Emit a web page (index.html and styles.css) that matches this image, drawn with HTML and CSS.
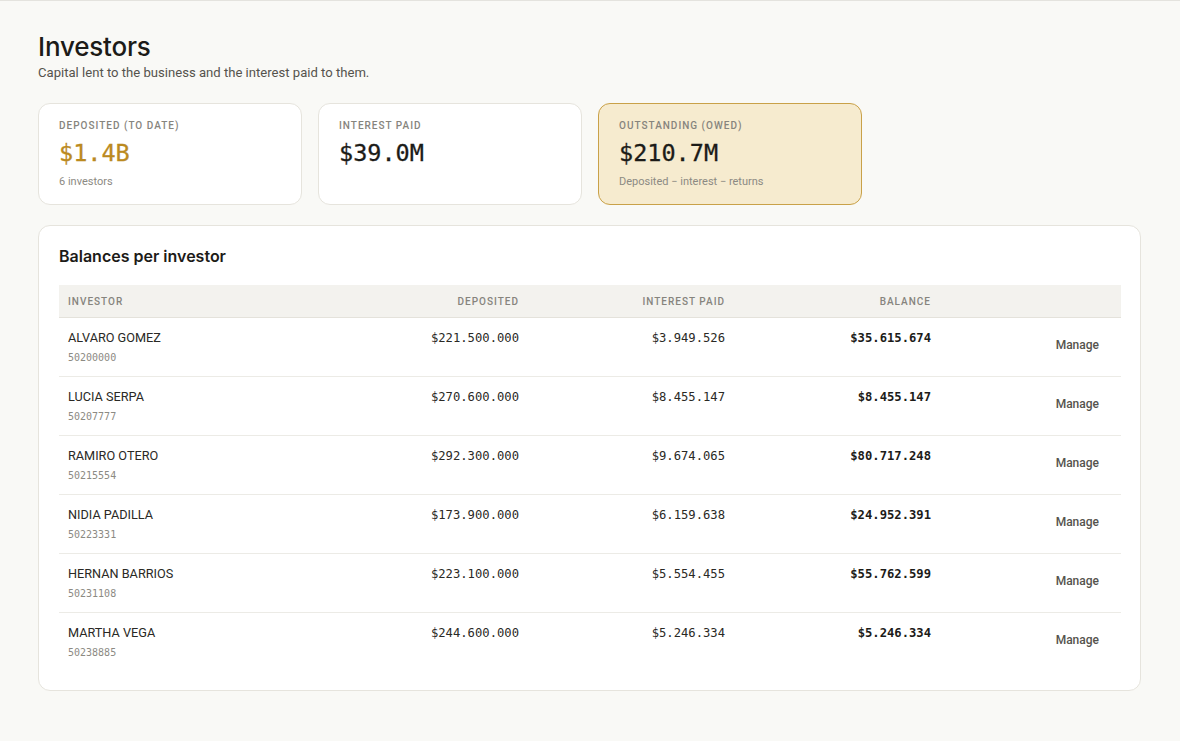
FILE: index.html
```html
<!DOCTYPE html>
<html lang="en">
<head>
    <meta charset="UTF-8">
    <meta name="viewport" content="width=device-width, initial-scale=1.0">
    <title>Investors</title>
    <link rel="stylesheet" href="styles.css">
</head>
<body>
    <div class="page">
        <h1 class="page-title">Investors</h1>
        <p class="page-sub">Capital lent to the business and the interest paid to them.</p>

        <div class="stats">
            <div class="stat">
                <div class="stat-label">Deposited (to date)</div>
                <div class="stat-value gold">$1.4B</div>
                <div class="stat-note">6 investors</div>
            </div>
            <div class="stat">
                <div class="stat-label">Interest paid</div>
                <div class="stat-value">$39.0M</div>
            </div>
            <div class="stat highlight">
                <div class="stat-label">Outstanding (owed)</div>
                <div class="stat-value">$210.7M</div>
                <div class="stat-note">Deposited &minus; interest &minus; returns</div>
            </div>
        </div>

        <div class="panel">
            <h2 class="panel-title">Balances per investor</h2>
            <table class="balances">
                <colgroup>
                    <col class="c-name">
                    <col class="c-num">
                    <col class="c-num">
                    <col class="c-num">
                    <col>
                </colgroup>
                <thead>
                    <tr>
                        <th>Investor</th>
                        <th class="num">Deposited</th>
                        <th class="num">Interest paid</th>
                        <th class="num">Balance</th>
                        <th></th>
                    </tr>
                </thead>
                <tbody id="rows"></tbody>
            </table>
        </div>
    </div>

    <script>
        var investors = [
            ["ALVARO GOMEZ", "50200000", "$221.500.000", "$3.949.526", "$35.615.674"],
            ["LUCIA SERPA", "50207777", "$270.600.000", "$8.455.147", "$8.455.147"],
            ["RAMIRO OTERO", "50215554", "$292.300.000", "$9.674.065", "$80.717.248"],
            ["NIDIA PADILLA", "50223331", "$173.900.000", "$6.159.638", "$24.952.391"],
            ["HERNAN BARRIOS", "50231108", "$223.100.000", "$5.554.455", "$55.762.599"],
            ["MARTHA VEGA", "50238885", "$244.600.000", "$5.246.334", "$5.246.334"]
        ];

        var tbody = document.getElementById('rows');
        investors.forEach(function (inv) {
            var tr = document.createElement('tr');
            tr.innerHTML =
                '<td><div class="inv-name">' + inv[0] + '</div><div class="inv-id">' + inv[1] + '</div></td>' +
                '<td class="num mono">' + inv[2] + '</td>' +
                '<td class="num mono">' + inv[3] + '</td>' +
                '<td class="num mono strong">' + inv[4] + '</td>' +
                '<td class="action"><button class="manage">Manage</button></td>';
            tbody.appendChild(tr);
        });
    </script>
</body>
</html>
```

FILE: styles.css
```css
body {
    margin: 0;
    padding: 0;
    background: #f9f9f6;
    border-top: 1px solid #e4e3de;
    font-family: 'Roboto', 'Liberation Sans', sans-serif;
    color: #1c1b18;
}

.page {
    padding: 30px 39px 50px 38px;
}

.page-title {
    font-family: 'Inter', 'Liberation Sans', sans-serif;
    font-size: 26px;
    font-weight: 500;
    letter-spacing: -0.2px;
    margin: 0;
    line-height: 32px;
}

.page-sub {
    font-size: 13.1px;
    color: #55534d;
    margin: 1px 0 0;
    line-height: 18px;
}

.stats {
    display: flex;
    gap: 16px;
    margin-top: 21px;
}

.stat {
    width: 264px;
    height: 102px;
    box-sizing: border-box;
    background: #fff;
    border: 1px solid #e6e4dd;
    border-radius: 12px;
    padding: 15px 20px;
}

.stat.highlight {
    background: #f6ebcf;
    border-color: #c9a148;
}

.stat-label {
    font-size: 10px;
    font-weight: 500;
    letter-spacing: 1px;
    text-transform: uppercase;
    color: #86847d;
    line-height: 14px;
}

.stat-value {
    font-family: 'DejaVu Sans Mono', 'Liberation Mono', monospace;
    font-size: 23.5px;
    line-height: 30px;
    margin-top: 5px;
    color: #1c1b18;
    -webkit-text-stroke: 0.3px currentColor;
}

.stat-value.gold {
    color: #bb8a1f;
}

.stat-note {
    font-size: 11px;
    color: #8c8a83;
    margin-top: 7px;
}

.panel {
    margin-top: 20px;
    background: #fff;
    border: 1px solid #e6e4dd;
    border-radius: 12px;
    padding: 19px 19px 19px 20px;
}

.panel-title {
    font-family: 'Inter', 'Liberation Sans', sans-serif;
    font-size: 16px;
    font-weight: 600;
    margin: 0 0 18px;
    line-height: 22px;
}

.balances {
    width: 100%;
    border-collapse: collapse;
    table-layout: fixed;
}

.c-name {
    width: 263px;
}

.c-num {
    width: 206px;
}

.balances th {
    background: #f3f2ee;
    border-bottom: 1px solid #e4e2db;
    font-size: 10px;
    font-weight: 500;
    letter-spacing: 1px;
    text-transform: uppercase;
    color: #86847d;
    text-align: left;
    padding: 0 9px;
    height: 32px;
}

.balances td {
    padding: 12px 9px 12px;
    vertical-align: top;
    border-bottom: 1px solid #ecebe6;
    font-size: 13px;
    line-height: 16px;
}

.balances tbody tr:last-child td {
    border-bottom: none;
}

.balances .num {
    text-align: right;
}

.mono {
    font-family: 'DejaVu Sans Mono', 'Liberation Mono', monospace;
    font-size: 12.2px !important;
    color: #2a2925;
}

.strong {
    font-weight: bold;
    color: #1c1b18;
}

.inv-name {
    font-size: 12.7px;
    color: #2a2925;
}

.inv-id {
    font-family: 'DejaVu Sans Mono', 'Liberation Mono', monospace;
    font-size: 10px;
    line-height: 12px;
    color: #8c8a83;
    margin-top: 6px;
}

.action {
    text-align: right;
    vertical-align: middle !important;
    padding-bottom: 16px !important;
}

.manage {
    background: none;
    border: none;
    font-family: 'Roboto', 'Liberation Sans', sans-serif;
    font-size: 12px;
    font-weight: 500;
    color: #55534d;
    padding: 4px 13px 4px 12px;
    cursor: pointer;
}
```
